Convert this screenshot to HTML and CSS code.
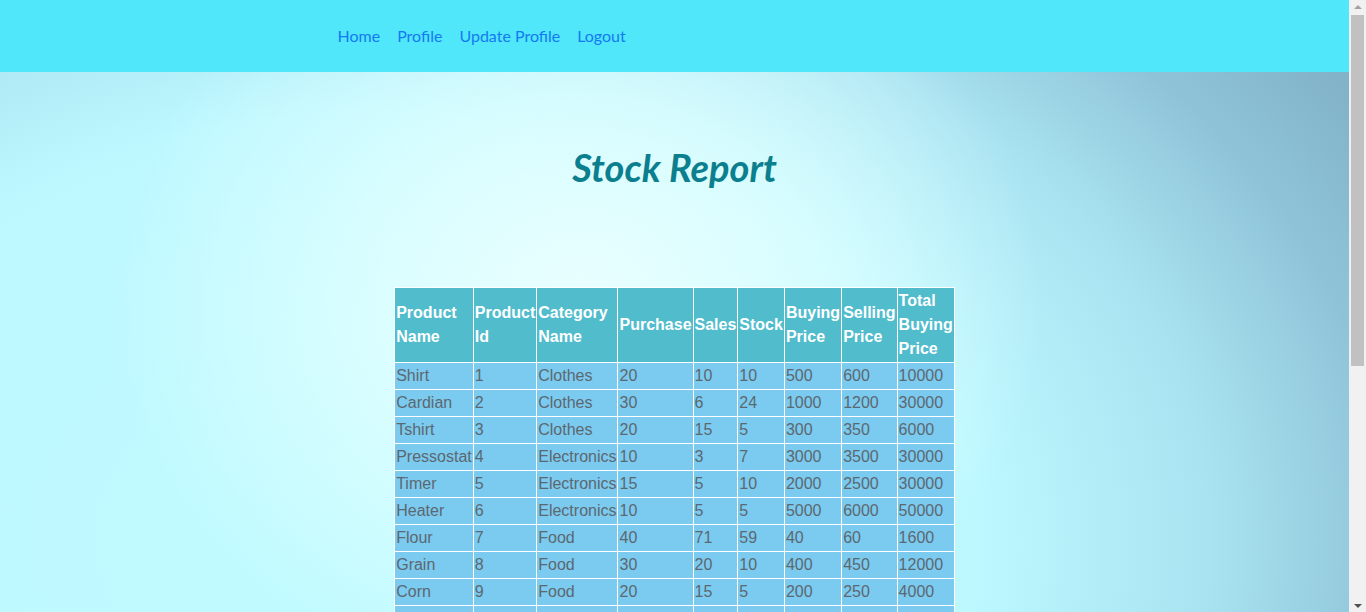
FILE: index.html
```html
<!DOCTYPE html>
<html lang="en">
<head>
<meta charset="utf-8">
<title>Stock Report</title>
<link rel="stylesheet" href="styles.css">
</head>
<body>
<div class="page">
  <nav class="topbar">
    <ul class="nav-list">
      <li><a class="nav-link" href="#">Home</a></li>
      <li><a class="nav-link" href="#">Profile</a></li>
      <li><a class="nav-link" href="#">Update Profile</a></li>
      <li><a class="nav-link" href="#">Logout</a></li>
    </ul>
  </nav>
  <main class="content">
    <h1 class="title">Stock Report</h1>
    <table class="report">
      <thead>
        <tr>
          <th>Product<br>Name</th>
          <th>Product<br>Id</th>
          <th>Category<br>Name</th>
          <th>Purchase</th>
          <th>Sales</th>
          <th>Stock</th>
          <th>Buying<br>Price</th>
          <th>Selling<br>Price</th>
          <th>Total<br>Buying<br>Price</th>
        </tr>
      </thead>
      <tbody>
        <tr><td>Shirt</td><td>1</td><td>Clothes</td><td>20</td><td>10</td><td>10</td><td>500</td><td>600</td><td>10000</td></tr>
        <tr><td>Cardian</td><td>2</td><td>Clothes</td><td>30</td><td>6</td><td>24</td><td>1000</td><td>1200</td><td>30000</td></tr>
        <tr><td>Tshirt</td><td>3</td><td>Clothes</td><td>20</td><td>15</td><td>5</td><td>300</td><td>350</td><td>6000</td></tr>
        <tr><td>Pressostat</td><td>4</td><td>Electronics</td><td>10</td><td>3</td><td>7</td><td>3000</td><td>3500</td><td>30000</td></tr>
        <tr><td>Timer</td><td>5</td><td>Electronics</td><td>15</td><td>5</td><td>10</td><td>2000</td><td>2500</td><td>30000</td></tr>
        <tr><td>Heater</td><td>6</td><td>Electronics</td><td>10</td><td>5</td><td>5</td><td>5000</td><td>6000</td><td>50000</td></tr>
        <tr><td>Flour</td><td>7</td><td>Food</td><td>40</td><td>71</td><td>59</td><td>40</td><td>60</td><td>1600</td></tr>
        <tr><td>Grain</td><td>8</td><td>Food</td><td>30</td><td>20</td><td>10</td><td>400</td><td>450</td><td>12000</td></tr>
        <tr><td>Corn</td><td>9</td><td>Food</td><td>20</td><td>15</td><td>5</td><td>200</td><td>250</td><td>4000</td></tr>
        <tr><td>Rice</td><td>10</td><td>Food</td><td>25</td><td>10</td><td>15</td><td>300</td><td>350</td><td>7500</td></tr>
        <tr><td>Oil</td><td>11</td><td>Food</td><td>12</td><td>4</td><td>8</td><td>150</td><td>200</td><td>1800</td></tr>
        <tr><td>Fan</td><td>12</td><td>Electronics</td><td>8</td><td>2</td><td>6</td><td>1500</td><td>1800</td><td>12000</td></tr>
      </tbody>
    </table>
  </main>
</div>
<div class="scrollbar" aria-hidden="true">
  <span class="sb-arrow sb-up"></span>
  <span class="sb-thumb"></span>
  <span class="sb-fill"></span>
  <span class="sb-arrow sb-down"></span>
</div>
</body>
</html>
```
FILE: styles.css
```css
html, body {
  margin: 0;
  padding: 0;
}
body {
  min-height: 100vh;
  font-family: "Lato", "Open Sans", sans-serif;
  background-color: #bdf8ff;
  background-image:
    radial-gradient(ellipse 620px 520px at 580px 300px, rgba(236,255,255,0.95) 0%, rgba(226,255,255,0.75) 35%, rgba(200,252,255,0) 75%),
    radial-gradient(ellipse 1150px 820px at 380px 540px, #c1fbff 0%, #bdf8ff 52%, #a9e3f1 72%, #8fc4d8 88%, #82b3c9 100%);
  background-attachment: fixed;
}
.page {
  margin-right: 17px;
}
.topbar {
  height: 72px;
  background: #50e7fa;
  display: flex;
  align-items: center;
  padding-left: 329px;
}
.nav-list {
  list-style: none;
  margin: 0;
  padding: 0;
  display: flex;
}
.nav-link {
  display: block;
  padding: 8px 8.5px;
  color: #1579f2;
  text-decoration: none;
  font-size: 16px;
  line-height: 24px;
}
.content {
  display: flex;
  flex-direction: column;
  align-items: center;
}
.title {
  margin: 73px 0 0;
  height: 142px;
  font-size: 38px;
  line-height: 44px;
  font-style: italic;
  font-weight: 700;
  color: #0b7f8e;
}
.report {
  border-collapse: collapse;
  font-family: "Liberation Sans", Arial, sans-serif;
  font-size: 16px;
  line-height: 24px;
  margin-bottom: 40px;
}
.report th,
.report td {
  border: 1px solid #ffffff;
  padding: 1px;
  text-align: left;
}
.report th {
  background: #50bccc;
  color: #ffffff;
  font-weight: 700;
  vertical-align: middle;
}
.report td {
  background: #7bcaef;
  color: #5b6870;
}

/* fake browser scrollbar overlay */
.scrollbar {
  position: fixed;
  top: 0;
  right: 0;
  width: 17px;
  height: 100vh;
  background: #f1f1f1;
  display: flex;
  flex-direction: column;
  align-items: center;
}
.sb-arrow {
  flex: 0 0 15px;
  width: 0;
  height: 0;
  box-sizing: border-box;
  border-left: 4px solid transparent;
  border-right: 4px solid transparent;
}
.sb-up {
  margin-top: 5px;
  flex-basis: 4px;
  border-bottom: 4px solid #a3a3a3;
}
.sb-down {
  margin: 0 0 4px;
  flex-basis: 4px;
  border-top: 4px solid #505050;
}
.sb-thumb {
  margin-top: 6px;
  width: 13px;
  height: 351px;
  background: #c1c1c1;
}
.sb-fill {
  flex: 1;
}
```
